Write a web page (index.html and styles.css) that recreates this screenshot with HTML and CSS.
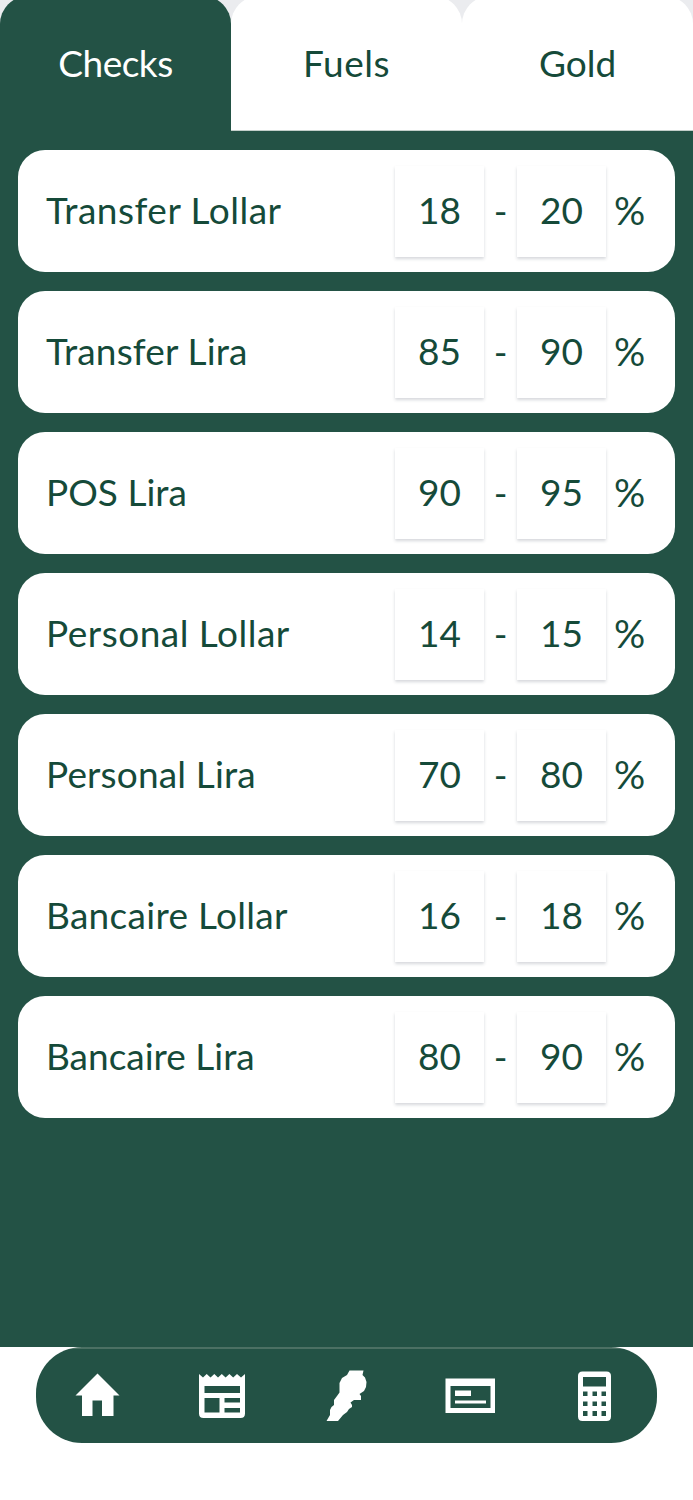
FILE: index.html
```html
<!DOCTYPE html>
<html lang="en">
<head>
<meta charset="utf-8">
<title>Rates</title>
<link rel="stylesheet" href="styles.css">
</head>
<body>
<div class="tabs">
  <div class="tab active tight">Checks</div>
  <div class="tab wide">Fuels</div>
  <div class="tab">Gold</div>
</div>
<main class="list">
  <div class="card"><span class="name wide">Transfer Lollar</span><span class="box">18</span><span class="dash">-</span><span class="box">20</span><span class="pct">%</span></div>
  <div class="card"><span class="name slight">Transfer Lira</span><span class="box">85</span><span class="dash">-</span><span class="box">90</span><span class="pct">%</span></div>
  <div class="card"><span class="name">POS Lira</span><span class="box">90</span><span class="dash">-</span><span class="box">95</span><span class="pct">%</span></div>
  <div class="card"><span class="name wide">Personal Lollar</span><span class="box">14</span><span class="dash">-</span><span class="box">15</span><span class="pct">%</span></div>
  <div class="card"><span class="name slight">Personal Lira</span><span class="box">70</span><span class="dash">-</span><span class="box">80</span><span class="pct">%</span></div>
  <div class="card"><span class="name medium">Bancaire Lollar</span><span class="box">16</span><span class="dash">-</span><span class="box">18</span><span class="pct">%</span></div>
  <div class="card"><span class="name">Bancaire Lira</span><span class="box">80</span><span class="dash">-</span><span class="box">90</span><span class="pct">%</span></div>
</main>
<nav class="nav">
  <svg class="icon" viewBox="0 0 60 60"><path d="M30.500 8.500 8.500 30.500H15V51H25.500V35.500H35V51H46.500V30.500H52.500Z"/></svg>
  <svg class="icon" viewBox="0 0 60 60"><path fill-rule="evenodd" d="M7 9 11 12.500 14.700 9 18.500 12.500 22.300 9 26 12.500 29.800 9 33.600 12.500 37.400 9 41.200 12.500 45 9 49 12.500 53 9V48.500Q53 53 48.500 53H11.500Q7 53 7 48.500ZM12.500 21V28H48V21ZM12.500 33V47.500H27.500V33ZM32.500 33V37.500H48V33ZM32.500 43V47.500H48V43Z"/></svg>
  <svg class="icon" viewBox="0 0 60 60"><path d="M33.500 5.500H47.500L46.500 10 49 12.500 50.500 17 50 22 48 26 43.500 29 45 31V35H38L34.500 37.500 36 40V42L33 44 31 47 27 50 22 56H10.500L14 50V45L15.500 42 18 40V35L21 31 23.500 27.500V18L26 13 31 10Z"/></svg>
  <svg class="icon" viewBox="0 0 60 60"><path fill-rule="evenodd" d="M4.500 13.500H54V48H4.500ZM9.500 21V43H49.500V21Z"/><path d="M14 25.500H30V31H14ZM14 35.500H45V38.500H14Z"/></svg>
  <svg class="icon" viewBox="0 0 60 60"><path fill-rule="evenodd" d="M17.500 6.500H41.500Q46 6.500 46 11V51.500Q46 56 41.500 56H17.500Q13 56 13 51.500V11Q13 6.500 17.500 6.500ZM18 12V21.500H41V12ZM18 26.500V31H22.500V26.500ZM27.500 26.500V31H32V26.500ZM36.500 26.500V31H41V26.500ZM18 36.500V41H22.500V36.500ZM27.500 36.500V41H32V36.500ZM36.500 36.500V41H41V36.500ZM18 46V51H22.500V46ZM27.500 46V51H32V46ZM36.500 46V51H41V46Z"/></svg>
</nav>
</body>
</html>
```
FILE: styles.css
```css
* { box-sizing: border-box; }
body {
  margin: 0;
  height: 1500px;
  overflow: hidden;
  background: #fff;
  color: #154a39;
  font: 37px/48px Lato, "Open Sans", sans-serif;
}
.wide { letter-spacing: .5px; }
.medium { letter-spacing: .3px; }
.slight { letter-spacing: .16px; }
.tight { letter-spacing: -.5px; }
.tabs {
  display: flex;
  height: 131px;
  background: linear-gradient(#ebecef 50px, #235245 50px);
  overflow: hidden;
}
.tab {
  flex: 1;
  height: 135px;
  margin-top: -4px;
  padding-top: 43px;
  border-bottom: 1px solid #c3cfca;
  border-radius: 28px 28px 0 0;
  background: #fff;
  text-align: center;
}
.active { border-bottom: 0; background: #235245; color: #fff; }
.list {
  height: 1216px;
  padding: 19px 18px 0;
  display: flex;
  flex-direction: column;
  gap: 19px;
  background: #235245;
}
.card {
  display: flex;
  align-items: center;
  height: 122px;
  padding: 0 28px;
  border-radius: 27px;
  background: #fff;
  white-space: nowrap;
}
.name { flex: 1; padding-bottom: 2px; }
.box {
  width: 89px;
  height: 91px;
  padding-top: 20px;
  text-align: center;
  box-shadow: 0 2px 3px rgba(30, 40, 60, .18);
}
.dash { width: 33px; text-align: center; }
.pct { width: 41px; padding: 0 0 2px 8px; font-size: 39px; }
.nav {
  display: flex;
  justify-content: space-between;
  width: 621px;
  height: 96px;
  margin: 0 auto;
  padding: 18px 32px 0 31px;
  border-radius: 46px;
  background: linear-gradient(#4b7063 2px, #235245 2px);
}
.icon { width: 60px; height: 60px; fill: #fff; }
```
